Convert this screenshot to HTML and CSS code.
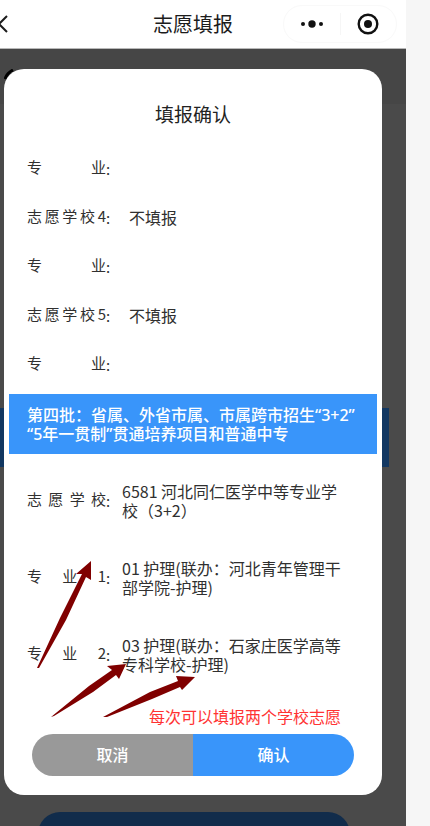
FILE: index.html
```html
<!DOCTYPE html>
<html lang="zh-CN">
<head>
<meta charset="utf-8">
<meta name="viewport" content="width=device-width, initial-scale=1">
<title>志愿填报</title>
<link rel="stylesheet" href="styles.css">
</head>
<body>
<div class="app">
  <header class="navbar">
    <button class="back" type="button" aria-label="返回">
      <svg width="9" height="20" viewBox="0 0 9 20"><path d="M7 2 L-1 10 L7 18" fill="none" stroke="#1c1c1c" stroke-width="2"/></svg>
    </button>
    <h1 class="navbar-title">志愿填报</h1>
    <div class="capsule">
      <button type="button" aria-label="更多">
        <svg width="24" height="10" viewBox="0 0 24 10" fill="#111"><circle cx="3" cy="5" r="2"/><circle cx="12" cy="5" r="3.7"/><circle cx="21" cy="5" r="2"/></svg>
      </button>
      <button type="button" aria-label="关闭">
        <svg width="22" height="22" viewBox="0 0 22 22"><circle cx="11" cy="11" r="9.3" fill="none" stroke="#111" stroke-width="2.4"/><circle cx="11" cy="11" r="4" fill="#111"/></svg>
      </button>
    </div>
  </header>

  <main class="stage">
    <div class="under-top">
      <svg width="16" height="16" viewBox="0 0 16 16"><path d="M9 1 Q3 4 1 10" fill="none" stroke="#000" stroke-width="3"/></svg>
    </div>
    <div class="under-band"></div>
    <section class="dialog" role="dialog" aria-labelledby="dialog-title">
      <h2 class="dialog-title" id="dialog-title">填报确认</h2>
      <dl class="rows">
        <div class="row"><dt>专业</dt><dd></dd></div>
        <div class="row"><dt>志愿学校4</dt><dd>不填报</dd></div>
        <div class="row"><dt>专业</dt><dd></dd></div>
        <div class="row"><dt>志愿学校5</dt><dd>不填报</dd></div>
        <div class="row"><dt>专业</dt><dd></dd></div>
      </dl>
      <h3 class="batch">第四批：省属、外省市属、市属跨市招生“3+2”“5年一贯制”贯通培养项目和普通中专</h3>
      <dl class="rows rows-long">
        <div class="row"><dt>志愿学校</dt><dd>6581 河北同仁医学中等专业学校（3+2）</dd></div>
        <div class="row"><dt>专业1</dt><dd>01 护理(联办：河北青年管理干部学院-护理)</dd></div>
        <div class="row"><dt>专业2</dt><dd>03 护理(联办：石家庄医学高等专科学校-护理)</dd></div>
      </dl>
      <p class="note">每次可以填报两个学校志愿</p>
      <div class="actions">
        <button class="cancel" type="button">取消</button>
        <button class="confirm" type="button">确认</button>
      </div>
      <svg class="arrows" width="162" height="162" viewBox="36 558 162 162" fill="#800000" aria-hidden="true">
        <path d="M91 561 L76 574 L82 574 L60 618 L37 668 L39 668 L66 620 L86 577 L91 580 Z"/>
        <path d="M126 664 L107 666 L112 670 L89 686 L51 717 L54 716 L93 692 L116 675 L119 679 Z"/>
        <path d="M195 677 L176 676 L178 681 L150 692 L103 717 L107 717 L152 699 L180 687 L182 690 Z"/>
      </svg>
    </section>
    <div class="under-button"></div>
  </main>
</div>
</body>
</html>
```

FILE: styles.css
```css
* { box-sizing: border-box; }

body {
  margin: 0;
  background: #f6f6f6;
  color: #303030;
  font: 16px/19px "Noto Sans CJK SC", sans-serif;
}

h1, h2, h3, p, dl, dd { margin: 0; }

button {
  padding: 0;
  border: 0;
  background: none;
  font: inherit;
}

svg { display: block; }

.app {
  display: flex;
  flex-direction: column;
  height: 100vh;
  margin-right: 24px;
  overflow: hidden;
}

.navbar {
  display: grid;
  grid-template-columns: 123px 1fr 123px;
  align-items: center;
  flex: none;
  height: 49px;
  background: #fff;
  border-bottom: 1px solid #b8b8b8;
}

.navbar-title {
  margin-left: -20px;
  color: #1c1c1c;
  font-size: 20px;
  font-weight: 400;
  line-height: 28px;
  text-align: center;
}

.capsule {
  display: flex;
  align-items: center;
  width: 114px;
  height: 38px;
  border: 1px solid #f9f9f9;
  border-radius: 19px;
}

.capsule button {
  display: flex;
  flex: 1;
  align-items: center;
  justify-content: center;
}

.capsule button + button { border-left: 1px solid #f6f6f6; }

.stage {
  position: relative;
  flex: 1;
  padding: 20px 24px 0 4px;
  background: #4a4a4a;
}

.under-top {
  position: absolute;
  inset: 0 0 auto;
  height: 55px;
  padding: 20px 4px;
  background: #464646;
}

.under-band {
  position: absolute;
  top: 359px;
  left: 0;
  right: 17px;
  height: 59px;
  background: #123761;
}

.dialog {
  position: relative;
  padding: 32px 5px 19px;
  background: #fff;
  border-radius: 20px;
}

.dialog-title {
  color: #222;
  font-size: 19px;
  font-weight: 400;
  line-height: 26px;
  text-align: center;
}

.rows { padding: 15px 18px 0; }

.row {
  display: flex;
  align-items: center;
  gap: 18px;
  height: 49px;
}

.row dt {
  position: relative;
  flex: none;
  width: 79px;
  font-size: 15px;
  text-align: justify;
  text-align-last: justify;
}

.row dt::after {
  content: ":";
  position: absolute;
  top: 2px;
  left: 100%;
}

.row dd { padding: 3px 0 0 5px; }

.batch {
  margin-top: 7px;
  padding: 12px 18px 10px;
  background: #3995fa;
  color: #fff;
  font: 500 16px/19px "Noto Sans", "Noto Sans CJK SC", sans-serif;
}

.rows-long { padding-top: 8px; }

.rows-long .row {
  gap: 16px;
  height: 77px;
}

.rows-long dt { margin-bottom: 5px; }

.rows-long dd { padding: 0 16px 0 0; }

.note {
  margin: 14px 0 8px 140px;
  color: #f33;
}

.actions {
  display: flex;
  height: 42px;
  margin: 0 23px;
  overflow: hidden;
  border-radius: 21px;
}

.actions button {
  flex: 1;
  padding-bottom: 2px;
  color: #fff;
  font-weight: 500;
}

.cancel { background: #999; }

.confirm { background: #3995fa; }

.arrows {
  position: absolute;
  top: 489px;
  left: 32px;
}

.under-button {
  height: 44px;
  margin: 17px 32px 0 34px;
  background: #112c4b;
  border-radius: 22px;
}
```
